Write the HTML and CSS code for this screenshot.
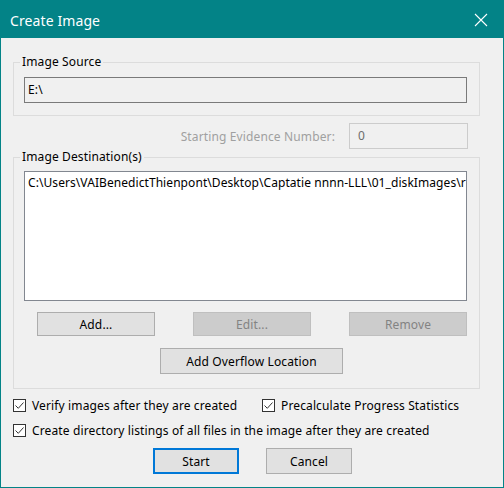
FILE: index.html
```html
<!DOCTYPE html>
<html>
<head>
<meta charset="utf-8">
<link rel="stylesheet" href="styles.css">
</head>
<body>
<div class="window">
  <div class="titlebar">
    <span class="title">Create Image</span>
    <svg class="close" width="14" height="14" viewBox="0 0 14 14"><path d="M1 1 L13 13 M13 1 L1 13" stroke="#fff" stroke-width="1.1" fill="none"/></svg>
  </div>
  <div class="content">
    <fieldset class="group source">
      <legend>Image Source</legend>
      <div class="textbox readonly">E:\</div>
    </fieldset>
    <div class="evidence-row">
      <span class="disabled-label">Starting Evidence Number:</span>
      <div class="textbox disabled">0</div>
    </div>
    <fieldset class="group dest">
      <legend>Image Destination(s)</legend>
      <div class="listbox">C:\Users\VAIBenedictThienpont\Desktop\Captatie nnnn-LLL\01_diskImages\r</div>
      <div class="btn-row">
        <button class="btn">Add...</button>
        <button class="btn" disabled>Edit...</button>
        <button class="btn" disabled>Remove</button>
      </div>
      <div class="overflow-row">
        <button class="btn overflow">Add Overflow Location</button>
      </div>
    </fieldset>
    <div class="check-row">
      <label class="check first"><span class="box"><svg width="11" height="11" viewBox="0 0 11 11"><path d="M1.5 5.5 L4.3 8.3 L9.5 2.5" stroke="#333" stroke-width="1" fill="none"/></svg></span>Verify images after they are created</label>
      <label class="check"><span class="box"><svg width="11" height="11" viewBox="0 0 11 11"><path d="M1.5 5.5 L4.3 8.3 L9.5 2.5" stroke="#333" stroke-width="1" fill="none"/></svg></span>Precalculate Progress Statistics</label>
    </div>
    <div class="check-row second">
      <label class="check"><span class="box"><svg width="11" height="11" viewBox="0 0 11 11"><path d="M1.5 5.5 L4.3 8.3 L9.5 2.5" stroke="#333" stroke-width="1" fill="none"/></svg></span>Create directory listings of all files in the image after they are created</label>
    </div>
    <div class="footer">
      <button class="btn default">Start</button>
      <button class="btn cancel">Cancel</button>
    </div>
  </div>
</div>
</body>
</html>
```
FILE: styles.css
```css
* { box-sizing: border-box; }
html, body { margin: 0; padding: 0; }
body {
  width: 504px;
  height: 488px;
  background: #f0f0f0;
  font-family: "Noto Sans", "Liberation Sans", sans-serif;
  font-size: 12px;
  letter-spacing: 0.13px;
  color: #000;
  overflow: hidden;
}
.window {
  width: 504px;
  height: 488px;
  border: 1px solid #038387;
  background: #f0f0f0;
}
.titlebar {
  height: 37px;
  background: #038387;
  display: flex;
  align-items: center;
  justify-content: space-between;
  padding: 0 15px 0 9px;
}
.title {
  color: #fff;
  font-size: 14px;
  letter-spacing: 0.1px;
  margin-top: 1px;
}
.close { display: block; margin-top: 1px; }
.content {
  padding: 0 0 0 12px;
}
.group {
  margin: 0;
  width: 467px;
  border: 1px solid #dcdcdc;
  min-inline-size: 0;
}
.group legend {
  padding: 0 2px;
  margin-left: -4px;
  line-height: 16px;
  height: 16px;
}
.source {
  margin-top: 16px;
  padding: 7px 12px 12px 10px;
}
.textbox {
  height: 26px;
  border: 1px solid #7a7a7a;
  padding: 0 0 0 3px;
  line-height: 23px;
}
.readonly { background: #f0f0f0; }
.evidence-row {
  display: flex;
  justify-content: flex-end;
  align-items: center;
  margin-top: 7px;
  padding-right: 35px;
  height: 26px;
}
.disabled-label {
  color: #a0a0a0;
  margin-right: 14px;
}
.textbox.disabled {
  width: 119px;
  border-color: #cccccc;
  color: #6d6d6d;
  padding-left: 8px;
  background: #f0f0f0;
}
.dest {
  margin-top: 0;
  padding: 6px 12px 14px 10px;
}
.listbox {
  height: 130px;
  background: #fff;
  border: 1px solid #828790;
  padding: 3px 0 0 3px;
  white-space: nowrap;
  overflow: hidden;
  line-height: 16px;
  letter-spacing: 0.07px;
}
.btn-row {
  display: flex;
  justify-content: space-between;
  margin-top: 11px;
  padding-left: 13px;
}
.btn {
  font-family: inherit;
  font-size: 12px;
  letter-spacing: 0.13px;
  color: #000;
  background: #e1e1e1;
  border: 1px solid #adadad;
  border-radius: 0;
  width: 118px;
  height: 24px;
  padding: 0;
  margin: 0;
}
.btn:disabled {
  background: #cccccc;
  border-color: #bfbfbf;
  color: #838383;
}
.overflow-row {
  margin-top: 12px;
  padding-left: 136px;
}
.btn.overflow {
  width: 183px;
  height: 26px;
}
.check-row {
  display: flex;
  margin-top: 9px;
  height: 15px;
  align-items: center;
}
.check-row.second { margin-top: 10px; }
.check {
  display: flex;
  align-items: center;
  white-space: nowrap;
}
.check.first { width: 249px; }
.box {
  width: 13px;
  height: 13px;
  border: 1px solid #333;
  background: #fff;
  display: flex;
  align-items: center;
  justify-content: center;
  margin-right: 6px;
}
.box svg { display: block; }
.footer {
  display: flex;
  margin-top: 10px;
  padding-left: 140px;
}
.btn.default {
  width: 86px;
  height: 26px;
  border: 2px solid #0078d7;
}
.btn.cancel {
  width: 86px;
  height: 26px;
  margin-left: 27px;
}
```
